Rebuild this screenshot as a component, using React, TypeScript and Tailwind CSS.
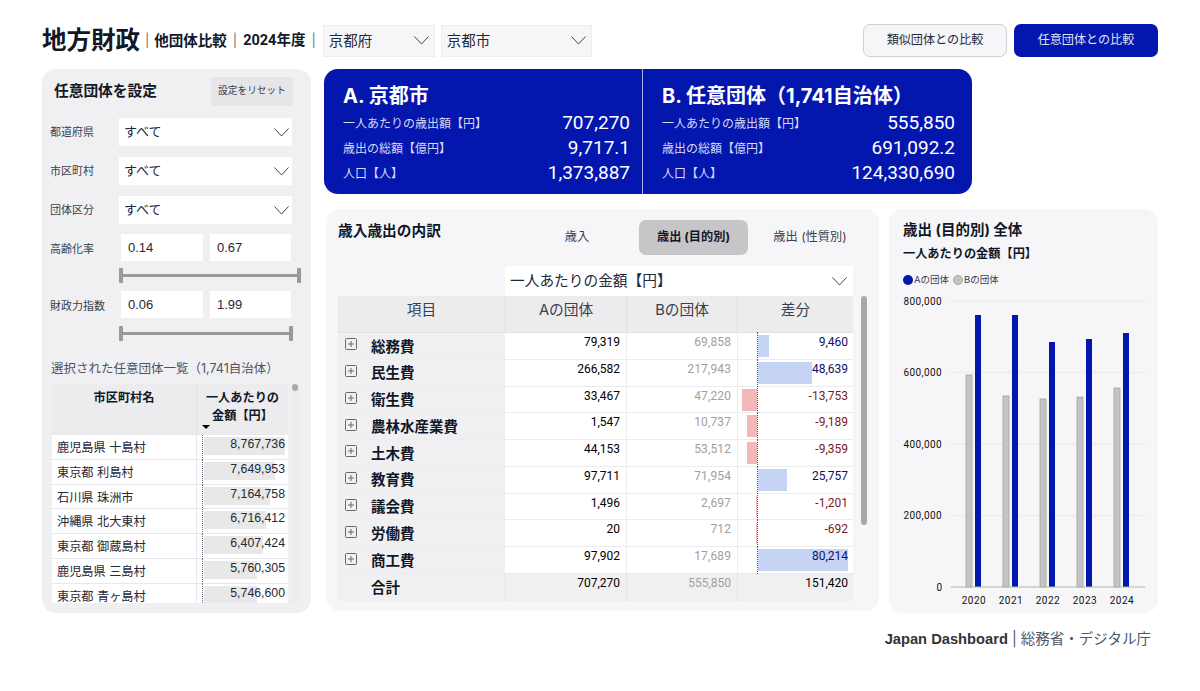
import React from 'react';

const num = "font-['Roboto','Noto_Sans_CJK_JP',sans-serif]";

const expenseRows = [
  { label: '総務費', a: '79,319', b: '69,858', diff: 9460 },
  { label: '民生費', a: '266,582', b: '217,943', diff: 48639 },
  { label: '衛生費', a: '33,467', b: '47,220', diff: -13753 },
  { label: '農林水産業費', a: '1,547', b: '10,737', diff: -9189 },
  { label: '土木費', a: '44,153', b: '53,512', diff: -9359 },
  { label: '教育費', a: '97,711', b: '71,954', diff: 25757 },
  { label: '議会費', a: '1,496', b: '2,697', diff: -1201 },
  { label: '労働費', a: '20', b: '712', diff: -692 },
  { label: '商工費', a: '97,902', b: '17,689', diff: 80214 },
];

const cityRows = [
  { name: '鹿児島県 十島村', value: 8767736 },
  { name: '東京都 利島村', value: 7649953 },
  { name: '石川県 珠洲市', value: 7164758 },
  { name: '沖縄県 北大東村', value: 6716412 },
  { name: '東京都 御蔵島村', value: 6407424 },
  { name: '鹿児島県 三島村', value: 5760305 },
  { name: '東京都 青ヶ島村', value: 5746600 },
];

const chartYears = [
  { year: '2020', x: 966, b: 375, a: 315 },
  { year: '2021', x: 1003, b: 396, a: 315 },
  { year: '2022', x: 1040, b: 399, a: 342 },
  { year: '2023', x: 1077, b: 397, a: 339 },
  { year: '2024', x: 1114, b: 388, a: 333 },
];

const Chevron = () => (
  <svg width="15" height="9" viewBox="0 0 15 9" fill="none" className="shrink-0">
    <path d="M0.5 0.5 L7.5 8 L14.5 0.5" stroke="#444" strokeWidth="1" />
  </svg>
);

const Select: React.FC<{ value: string; className: string }> = ({ value, className }) => (
  <div className={`flex items-center justify-between ${className}`}>
    <span>{value}</span>
    <Chevron />
  </div>
);

const FilterSelect: React.FC<{ label: string }> = ({ label }) => (
  <div className="flex items-center h-[28px] mb-[11px]">
    <span className="w-[77px] pl-[8px] text-[11px] text-gray-700">{label}</span>
    <Select value="すべて" className="w-[173px] h-[28px] bg-white pl-[5px] pr-[3px] text-[13px] text-gray-800" />
  </div>
);

const RangeFilter: React.FC<{ label: string; min: string; max: string; sliderWidth: string; sliderGap: string }> = ({ label, min, max, sliderWidth, sliderGap }) => (
  <div>
    <div className="flex items-center h-[27px]">
      <span className="w-[79px] pl-[8px] text-[11px] text-gray-700 pt-[4px]">{label}</span>
      <div className="w-[82px] h-[27px] bg-white flex items-center pl-[7px] text-[13px] text-gray-800 font-['Liberation_Sans',sans-serif]">{min}</div>
      <div className="w-[81px] h-[27px] bg-white flex items-center pl-[7px] ml-[7px] text-[13px] text-gray-800 font-['Liberation_Sans',sans-serif]">{max}</div>
    </div>
    <div className={`flex items-center justify-between ml-[77px] h-[15px] relative ${sliderGap} ${sliderWidth}`}>
      <div className="absolute left-0 right-0 h-[3px] bg-[#999999]" />
      <div className="w-[4px] h-[15px] rounded-[1px] bg-[#999999] z-10" />
      <div className="w-[4px] h-[15px] rounded-[1px] bg-[#999999] z-10" />
    </div>
  </div>
);

const SummaryCard: React.FC<{ title: string; rows: [string, string][]; className: string }> = ({ title, rows, className }) => (
  <div className={className}>
    <div className="text-[20px] font-bold text-white leading-[28px] mb-[1px]">{title}</div>
    {rows.map(([label, value]) => (
      <div key={label} className="flex items-center justify-between h-[25px]">
        <span className="text-[12px] text-[#d5d9f5]">{label}</span>
        <span className={`text-[19px] text-white ${num}`}>{value}</span>
      </div>
    ))}
  </div>
);

const PlusBox = () => (
  <svg width="12" height="12" viewBox="0 0 12 12" fill="none" className="shrink-0">
    <rect x="0.5" y="0.5" width="11" height="11" rx="1" stroke="#666" />
    <path d="M3 6 H9 M6 3 V9" stroke="#666" />
  </svg>
);

const formatDiff = (n: number) => n.toLocaleString('en-US');

const App: React.FC = () => {
  return (
    <div className="w-[1200px] h-[691px] bg-white overflow-hidden pt-[24px] pl-[42px] pr-[42px] text-gray-900 font-['Inter','Noto_Sans_CJK_JP',sans-serif]">
      {/* header */}
      <div className="flex items-center h-[33px]">
        <h1 className="text-[24.5px] font-bold leading-none">地方財政</h1>
        <span className="text-[13px] text-gray-500 ml-[5px] mr-[5px]">|</span>
        <span className="text-[14.5px] font-bold">他団体比較</span>
        <span className="text-[13px] text-gray-500 mx-[6px]">|</span>
        <span className="text-[14.5px] font-bold font-['Roboto','Noto_Sans_CJK_JP',sans-serif]">2024年度</span>
        <span className="text-[13px] text-gray-500 ml-[6px] mr-[7px]">|</span>
        <Select value="京都府" className="w-[112px] h-[32px] bg-[#f6f6f9] border border-[#eeeeee] pl-[5px] pr-[5px] text-[14.5px] text-gray-800" />
        <Select value="京都市" className="w-[151px] h-[32px] ml-[6px] bg-[#f6f6f9] border border-[#eeeeee] pl-[5px] pr-[5px] text-[14.5px] text-gray-800" />
        <div className="ml-auto flex gap-[7px]">
          <button className="w-[144px] h-[33px] rounded-[7px] bg-[#f6f6f9] border border-[#cfcfd4] text-[12.1px] text-gray-800">類似団体との比較</button>
          <button className="w-[144px] h-[33px] rounded-[7px] bg-[#0316ae] text-[12.1px] text-[#dfe2fa]">任意団体との比較</button>
        </div>
      </div>

      {/* main */}
      <div className="flex gap-[13px] mt-[12px]">
        {/* left filter panel */}
        <div className="w-[269px] h-[544px] rounded-[14px] bg-[#f0f0f2] overflow-hidden pt-[8px] shrink-0">
          <div className="flex items-center justify-between pl-[12px] pr-[18px] h-[29px] mb-[12px]">
            <span className="text-[14.7px] font-bold">任意団体を設定</span>
            <span className="w-[82px] h-[29px] flex items-center justify-center bg-[#e6e6e8] text-[9.7px] text-gray-700">設定をリセット</span>
          </div>
          <FilterSelect label="都道府県" />
          <FilterSelect label="市区町村" />
          <FilterSelect label="団体区分" />
          <div className="-mt-[1px]">
            <RangeFilter label="高齢化率" min="0.14" max="0.67" sliderWidth="w-[182px]" sliderGap="mt-[7px]" />
          </div>
          <div className="mt-[8px]">
            <RangeFilter label="財政力指数" min="0.06" max="1.99" sliderWidth="w-[174px]" sliderGap="mt-[8px]" />
          </div>
          <div className="text-[12.5px] text-gray-600 pl-[9px] mt-[19px] h-[18px] leading-[18px]">選択された任意団体一覧（1,741自治体）</div>
          <div className="flex mt-[6px] ml-[10px]">
            <div className="w-[236px] h-[219px] overflow-hidden">
              <div className="grid grid-cols-[145px_91px] h-[50px] bg-[#ececee] text-[12.2px] font-bold text-center">
                <div className="pt-[5px] border-r border-[#e0e0e2]">市区町村名</div>
                <div className="pt-[5px] leading-[18px] relative">
                  一人あたりの<br />金額【円】
                  <span className="absolute left-[5px] bottom-[5px] w-0 h-0 border-l-[4px] border-r-[4px] border-t-[4px] border-l-transparent border-r-transparent border-t-black" />
                </div>
              </div>
              {cityRows.map((row) => (
                <div key={row.name} className="grid grid-cols-[145px_91px] h-[24.8px] bg-white border-t border-[#e8e8ea]">
                  <div className="pl-[5px] text-[12.2px] text-gray-800 leading-[25px] border-r border-[#e8e8ea]">{row.name}</div>
                  <div className="relative border-l border-dotted border-gray-500 ml-[5px]">
                    <div className="absolute left-[1px] top-[2px] h-[18px] bg-[#e8e8e8]" style={{ width: (row.value / 8767736) * 81 }} />
                    <div className="relative text-right pr-[3px] text-[12.3px] leading-[19px] text-gray-800 font-['Liberation_Sans',sans-serif]">{row.value.toLocaleString('en-US')}</div>
                  </div>
                </div>
              ))}
            </div>
            <div className="w-[7px] ml-[4px] h-[219px] bg-[#ececef]">
              <div className="w-[6px] h-[7px] rounded-full bg-[#aaaaaa]" />
            </div>
          </div>
        </div>

        {/* right area */}
        <div className="flex-1">
          <div className="flex w-[648px] h-[125px] rounded-[14px] bg-[#0316ae] overflow-hidden">
            <SummaryCard
              title="A. 京都市"
              className="w-[319px] pl-[19px] pr-[12px] pt-[13px] border-r border-[#aab2ee]"
              rows={[
                ['一人あたりの歳出額【円】', '707,270'],
                ['歳出の総額【億円】', '9,717.1'],
                ['人口【人】', '1,373,887'],
              ]}
            />
            <SummaryCard
              title="B. 任意団体（1,741自治体）"
              className="flex-1 pl-[19px] pr-[17px] pt-[13px]"
              rows={[
                ['一人あたりの歳出額【円】', '555,850'],
                ['歳出の総額【億円】', '691,092.2'],
                ['人口【人】', '124,330,690'],
              ]}
            />
          </div>

          <div className="flex gap-[10px] mt-[15px] ml-[2px]">
            {/* breakdown table */}
            <div className="w-[553px] h-[402px] rounded-[14px] bg-[#f6f6f9] pl-[12px] pr-[12px] pt-[11px] shrink-0">
              <div className="flex h-[35px]">
                <div className="w-[177px] shrink-0 text-[14.7px] font-bold leading-[22px]">歳入歳出の内訳</div>
                <div className="w-[124px] shrink-0 flex items-center justify-center text-[12.2px] text-gray-700">歳入</div>
                <div className="w-[109px] shrink-0 rounded-[7px] bg-[#c6c6c8] flex items-center justify-center text-[12.2px] font-bold">歳出 (目的別)</div>
                <div className="w-[124px] shrink-0 flex items-center justify-center text-[12.2px] text-gray-700">歳出 (性質別)</div>
              </div>
              <div className="flex mt-[11px]">
                <div className="w-[515px]">
                  <div className="ml-[167px] w-[348px]">
                    <Select value="一人あたりの金額【円】" className="h-[30px] bg-white pl-[5px] pr-[6px] text-[14.7px] text-gray-800" />
                  </div>
                  <div className="grid grid-cols-[167px_121px_111px_116px] h-[37px] bg-[#ececee] text-[14.7px] text-gray-700 text-center leading-[28px] border-b border-[#e2e2e4]">
                    <div>項目</div>
                    <div className="border-l border-[#e2e2e4]">Aの団体</div>
                    <div className="border-l border-[#e2e2e4]">Bの団体</div>
                    <div className="border-l border-[#e2e2e4]">差分</div>
                  </div>
                  {expenseRows.map((row) => (
                    <div key={row.label} className="grid grid-cols-[167px_121px_111px_116px] h-[26.78px] border-b border-[#ececee]">
                      <div className="bg-[#f0f0f2] flex items-center pl-[7px] gap-[14px] text-[14.5px] font-bold">
                        <span className="-mt-[3px]"><PlusBox /></span>
                        <span className="pt-[1px]">{row.label}</span>
                      </div>
                      <div className={`bg-white text-right pr-[6px] text-[12px] leading-[18px] text-black ${num}`}>{row.a}</div>
                      <div className={`bg-white text-right pr-[6px] text-[12px] leading-[18px] tracking-[0.01em] text-[#a0a0a0] border-l border-[#ececee] ${num}`}>{row.b}</div>
                      <div className="bg-white border-l border-[#ececee] relative">
                        <div className={`absolute top-[2px] h-[22px] ${row.diff > 0 ? 'bg-[#c5d3f5]' : 'bg-[#f4b8bb]'}`} style={row.diff > 0 ? { left: 20, width: row.diff * 0.00112 } : { right: 96, width: -row.diff * 0.00112 }} />
                        <div className="absolute left-[19px] -top-[1px] -bottom-[1px] border-l border-dotted border-gray-600" />
                        <div className={`relative text-right pr-[5px] text-[12px] leading-[18px] ${num} ${row.diff > 0 ? 'text-[#10106a]' : 'text-[#7a1a1a]'}`}>{formatDiff(row.diff)}</div>
                      </div>
                    </div>
                  ))}
                  <div className="grid grid-cols-[167px_121px_111px_116px] h-[27px] bg-[#f0f0f2]">
                    <div className="pl-[33px] text-[14.5px] font-bold leading-[28px]">合計</div>
                    <div className={`text-right pr-[6px] text-[12px] leading-[18px] text-black border-l border-[#e6e6e8] ${num}`}>707,270</div>
                    <div className={`text-right pr-[6px] text-[12px] leading-[18px] text-[#a0a0a0] border-l border-[#e6e6e8] ${num}`}>555,850</div>
                    <div className={`text-right pr-[5px] text-[12px] leading-[18px] text-black border-l border-[#e6e6e8] ${num}`}>151,420</div>
                  </div>
                </div>
                <div className="w-[6px] h-[229px] ml-[8px] mt-[30px] rounded-full bg-[#a8a8a8]" />
              </div>
            </div>

            {/* chart */}
            <div className="w-[269px] h-[404px] rounded-[14px] bg-[#f6f6f9] pl-[14px] pt-[11px] shrink-0">
              <div className="text-[14.5px] font-bold leading-[20px]">歳出 (目的別) 全体</div>
              <div className="text-[12.2px] font-bold leading-[20px] mt-[4px]">一人あたりの金額【円】</div>
              <div className="flex items-center text-[9.5px] text-gray-700 mt-[9px] h-[14px]">
                <span className="w-[10px] h-[10px] rounded-full bg-[#0316ae] mr-[1px]" />
                <span>Aの団体</span>
                <span className="w-[10px] h-[10px] rounded-full bg-[#c4c4c4] border border-[#a8a8a8] ml-[4px] mr-[1px]" />
                <span>Bの団体</span>
              </div>
              <svg width="255" height="318" viewBox="903 290 255 318" className="block mt-[3px]">
                {[
                  ['800,000', 301],
                  ['600,000', 372.5],
                  ['400,000', 444],
                  ['200,000', 515.5],
                ].map(([label, y]) => (
                  <g key={label}>
                    <line x1="951" x2="1146" y1={y} y2={y} stroke="#ececee" strokeWidth="1.5" />
                    <text x="942" y={Number(y) + 3.5} textAnchor="end" fontSize="10" fontFamily="Roboto, sans-serif" letterSpacing="0.4" fill="#111">{label}</text>
                  </g>
                ))}
                <text x="942" y="591" textAnchor="end" fontSize="10" fontFamily="Roboto, sans-serif" fill="#111">0</text>
                {chartYears.map((d) => (
                  <g key={d.year}>
                    <rect x={d.x} y={d.b} width="6" height={587 - d.b} fill="#c4c4c4" stroke="#a0a0a0" strokeWidth="0.75" />
                    <rect x={d.x + 9} y={d.a} width="6" height={587 - d.a} fill="#0316ae" />
                    <text x={d.x + 8} y="604" textAnchor="middle" fontSize="10" fontFamily="Roboto, sans-serif" letterSpacing="0.5" fill="#111">{d.year}</text>
                  </g>
                ))}
                <line x1="951" x2="1145" y1="587" y2="587" stroke="#b4b4b4" strokeWidth="1" />
              </svg>
            </div>
          </div>
        </div>
      </div>

      {/* footer */}
      <div className="flex justify-end pr-[7px] mt-[16px] text-[14.5px] leading-[20px] text-[#333]">
        <span className="font-bold font-['Liberation_Sans','Noto_Sans_CJK_JP',sans-serif] text-[14.7px]">Japan Dashboard</span>
        <span className="ml-[4px] text-gray-600">| 総務省・デジタル庁</span>
      </div>
    </div>
  );
};

export default App;
